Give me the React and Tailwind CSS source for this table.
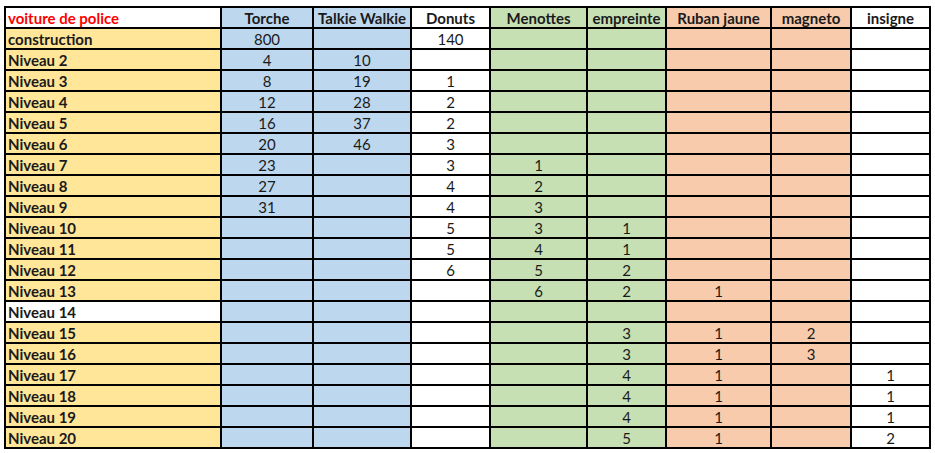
import React from "react";

const Y = "bg-[#ffe699]";
const B = "bg-[#bdd7ee]";
const W = "bg-white";
const G = "bg-[#c6e0b4]";
const O = "bg-[#f8cbad]";

const colBg = [Y, B, B, W, G, G, O, O, W];

const headers = ["voiture de police", "Torche", "Talkie Walkie", "Donuts", "Menottes", "empreinte", "Ruban jaune", "magneto", "insigne"];

const rows = [
  ["construction", "800", "", "140", "", "", "", "", ""],
  ["Niveau 2", "4", "10", "", "", "", "", "", ""],
  ["Niveau 3", "8", "19", "1", "", "", "", "", ""],
  ["Niveau 4", "12", "28", "2", "", "", "", "", ""],
  ["Niveau 5", "16", "37", "2", "", "", "", "", ""],
  ["Niveau 6", "20", "46", "3", "", "", "", "", ""],
  ["Niveau 7", "23", "", "3", "1", "", "", "", ""],
  ["Niveau 8", "27", "", "4", "2", "", "", "", ""],
  ["Niveau 9", "31", "", "4", "3", "", "", "", ""],
  ["Niveau 10", "", "", "5", "3", "1", "", "", ""],
  ["Niveau 11", "", "", "5", "4", "1", "", "", ""],
  ["Niveau 12", "", "", "6", "5", "2", "", "", ""],
  ["Niveau 13", "", "", "", "6", "2", "1", "", ""],
  ["Niveau 14", "", "", "", "", "", "", "", ""],
  ["Niveau 15", "", "", "", "", "3", "1", "2", ""],
  ["Niveau 16", "", "", "", "", "3", "1", "3", ""],
  ["Niveau 17", "", "", "", "", "4", "1", "", "1"],
  ["Niveau 18", "", "", "", "", "4", "1", "", "1"],
  ["Niveau 19", "", "", "", "", "4", "1", "", "1"],
  ["Niveau 20", "", "", "", "", "5", "1", "", "2"],
];

export default function App() {
  return (
    <div className="w-[935px] h-[453px] bg-white pt-[6px] pl-[4px] font-['Lato','Liberation_Sans',sans-serif] text-[15px] text-[#1a1a1a]">
      <div className="grid grid-cols-[214px_90px_96px_77px_95px_77px_103px_78px_77px] auto-rows-[19px] gap-[2px] p-[2px] bg-black w-[927px]">
        {headers.map((h, i) => (
          <div
            key={"h" + i}
            className={`${i === 0 ? "bg-white text-[#ff0000] justify-start pl-[2px]" : colBg[i] + " justify-center"} flex items-center font-bold leading-none pt-[1px]`}
          >
            {h}
          </div>
        ))}
        {rows.map((r, ri) =>
          r.map((c, ci) => {
            const bg = ci === 0 && r[0] === "Niveau 14" ? W : colBg[ci];
            return (
              <div
                key={ri + "-" + ci}
                className={`${bg} flex items-center leading-none pt-[1px] ${ci === 0 ? "justify-start pl-[2px] font-bold" : "justify-center"}`}
              >
                {c}
              </div>
            );
          })
        )}
      </div>
    </div>
  );
}
